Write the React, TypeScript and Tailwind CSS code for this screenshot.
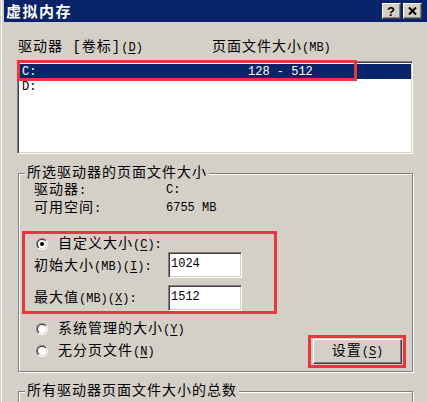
import type { ReactNode } from "react";

const F = "font-['Liberation_Mono','Noto_Sans_CJK_SC',monospace]";

function Radio({ checked }: { checked?: boolean }) {
  return (
    <svg width="12" height="12" viewBox="0 0 12 12" className="shrink-0">
      <defs>
        <linearGradient id="radio-outer" x1="0" y1="0" x2="1" y2="1">
          <stop offset="0.5" stopColor="#808080" />
          <stop offset="0.5" stopColor="#ffffff" />
        </linearGradient>
        <linearGradient id="radio-inner" x1="0" y1="0" x2="1" y2="1">
          <stop offset="0.5" stopColor="#404040" />
          <stop offset="0.5" stopColor="#d4d0c8" />
        </linearGradient>
      </defs>
      <circle cx="6" cy="6" r="6" fill="url(#radio-outer)" />
      <circle cx="6" cy="6" r="5" fill="url(#radio-inner)" />
      <circle cx="6" cy="6" r="4" fill="#ffffff" />
      {checked && <circle cx="6" cy="6" r="2" fill="#000000" />}
    </svg>
  );
}

// latin text in the dialog font is half-width
function L({ children }: { children: ReactNode }) {
  return <span className="text-[12px] tracking-normal">{children}</span>;
}

function Key({ children }: { children: ReactNode }) {
  return <span className="underline underline-offset-2">{children}</span>;
}

function TitleButton({ children }: { children: ReactNode }) {
  return (
    <div className="flex h-[16px] w-[19px] items-center justify-center border border-t-white border-l-white border-r-[#404040] border-b-[#404040] bg-[#d4d0c8] shadow-[inset_-1px_-1px_0_#808080]">
      {children}
    </div>
  );
}

function TextBox({ value }: { value: string }) {
  return (
    <div className="h-[26px] w-[74px] border border-t-[#808080] border-l-[#808080] border-r-white border-b-white bg-white pl-[2px] pt-[3px] text-[12px] leading-[16px] tracking-normal shadow-[inset_1px_1px_0_#404040,inset_-1px_-1px_0_#d4d0c8]">
      {value}
    </div>
  );
}

export default function App() {
  return (
    <div
      className={`h-[402px] w-[427px] overflow-hidden bg-[#d4d0c8] pl-[4px] text-[14px] leading-[16px] tracking-[1px] text-black shadow-[inset_1px_0_0_#d4d0c8,inset_2px_0_0_#ffffff] ${F}`}
    >
      {/* title bar */}
      <div className="flex h-[22px] items-center justify-between bg-[#0a246a] pl-[2px] pr-[5px]">
        <span className="font-['Noto_Sans_CJK_SC',sans-serif] text-[15px] font-bold tracking-[1.5px] text-white">
          虚拟内存
        </span>
        <div className="flex gap-[2px]">
          <TitleButton>
            <span className="font-['Liberation_Sans',sans-serif] text-[13px] font-bold leading-none">?</span>
          </TitleButton>
          <TitleButton>
            <svg width="9" height="8" viewBox="0 0 9 8">
              <path d="M1 0.5 L8 7.5 M8 0.5 L1 7.5" stroke="#000" strokeWidth="2" />
            </svg>
          </TitleButton>
        </div>
      </div>

      <div className="pl-[13px]">
        {/* column headers */}
        <div className="mt-[17px] flex pl-[1px]">
          <span className="w-[194px]">
            驱动器 [卷标]
            <L>
              (<Key>D</Key>)
            </L>
          </span>
          <span>
            页面文件大小<L>(MB)</L>
          </span>
        </div>

        {/* drive list */}
        <div className="relative mt-[5px] h-[93px] w-[396px] border border-t-[#808080] border-l-[#808080] border-r-white border-b-white bg-white p-[1px] shadow-[inset_1px_1px_0_#404040,inset_-1px_-1px_0_#d4d0c8]">
          <div className="mt-[1px] flex h-[15px] items-center bg-[#0a246a] pl-[3px] text-[12px] tracking-normal text-white">
            <span className="w-[226px]">C:</span>
            <span>128 - 512</span>
          </div>
          <div className="flex h-[15px] items-center pl-[3px] text-[12px] tracking-normal">
            <span className="w-[226px]">D:</span>
          </div>
          <div className="absolute left-[-1px] top-[-2px] h-[21px] w-[340px] border-[3px] border-[#e8383d]" />
        </div>

        {/* selected drive */}
        <fieldset className="ml-[1px] mt-[11px] w-[395px] border border-[#808080] pb-[3px] pr-[6px] shadow-[inset_1px_1px_0_#ffffff,1px_1px_0_#ffffff]">
          <legend className="ml-[6px] bg-[#d4d0c8] px-[2px] leading-[16px]">所选驱动器的页面文件大小</legend>

          <div className="pl-[15px] pt-[1px] leading-[17px]">
            <div className="flex">
              <span className="w-[132px]">
                驱动器<L>:</L>
              </span>
              <L>C:</L>
            </div>
            <div className="flex">
              <span className="w-[132px]">
                可用空间<L>:</L>
              </span>
              <L>6755 MB</L>
            </div>
          </div>

          <div className="ml-[3px] mt-[13px] w-[255px] border-[3px] border-[#e8383d]">
            <div className="mt-[2px] flex h-[16px] items-center gap-[10px] pl-[11px]">
              <Radio checked />
              <span>
                自定义大小
                <L>
                  (<Key>C</Key>):
                </L>
              </span>
            </div>
            <div className="flex h-[26px] items-center pl-[9px]">
              <span className="w-[134px] pt-[3px]">
                初始大小
                <L>
                  (MB)(<Key>I</Key>):
                </L>
              </span>
              <TextBox value="1024" />
            </div>
            <div className="mt-[7px] flex h-[26px] items-center pl-[9px]">
              <span className="w-[134px] pt-[1px]">
                最大值
                <L>
                  (MB)(<Key>X</Key>):
                </L>
              </span>
              <TextBox value="1512" />
            </div>
          </div>

          <div className="flex items-start justify-between">
            <div className="ml-[17px] mt-[7px] flex flex-col gap-[6px]">
              <div className="flex h-[16px] items-center gap-[10px]">
                <Radio />
                <span>
                  系统管理的大小
                  <L>
                    (<Key>Y</Key>)
                  </L>
                </span>
              </div>
              <div className="flex h-[16px] items-center gap-[10px]">
                <Radio />
                <span>
                  无分页文件
                  <L>
                    (<Key>N</Key>)
                  </L>
                </span>
              </div>
            </div>
            <div className="mt-[21px] border-[3px] border-[#e8383d] pb-[1px] pl-[2px] pr-[1px] pt-[1px]">
              <div className="flex h-[25px] w-[89px] items-center justify-center border border-t-white border-l-white border-r-[#404040] border-b-[#404040] bg-[#d4d0c8] shadow-[inset_-1px_-1px_0_#808080]">
                <span>
                  设置
                  <L>
                    (<Key>S</Key>)
                  </L>
                </span>
              </div>
            </div>
          </div>
        </fieldset>

        {/* totals */}
        <fieldset className="ml-[1px] mt-[11px] h-[60px] w-[395px] border border-[#808080] shadow-[inset_1px_1px_0_#ffffff,1px_1px_0_#ffffff]">
          <legend className="ml-[6px] bg-[#d4d0c8] px-[2px] leading-[16px]">所有驱动器页面文件大小的总数</legend>
        </fieldset>
      </div>
    </div>
  );
}
